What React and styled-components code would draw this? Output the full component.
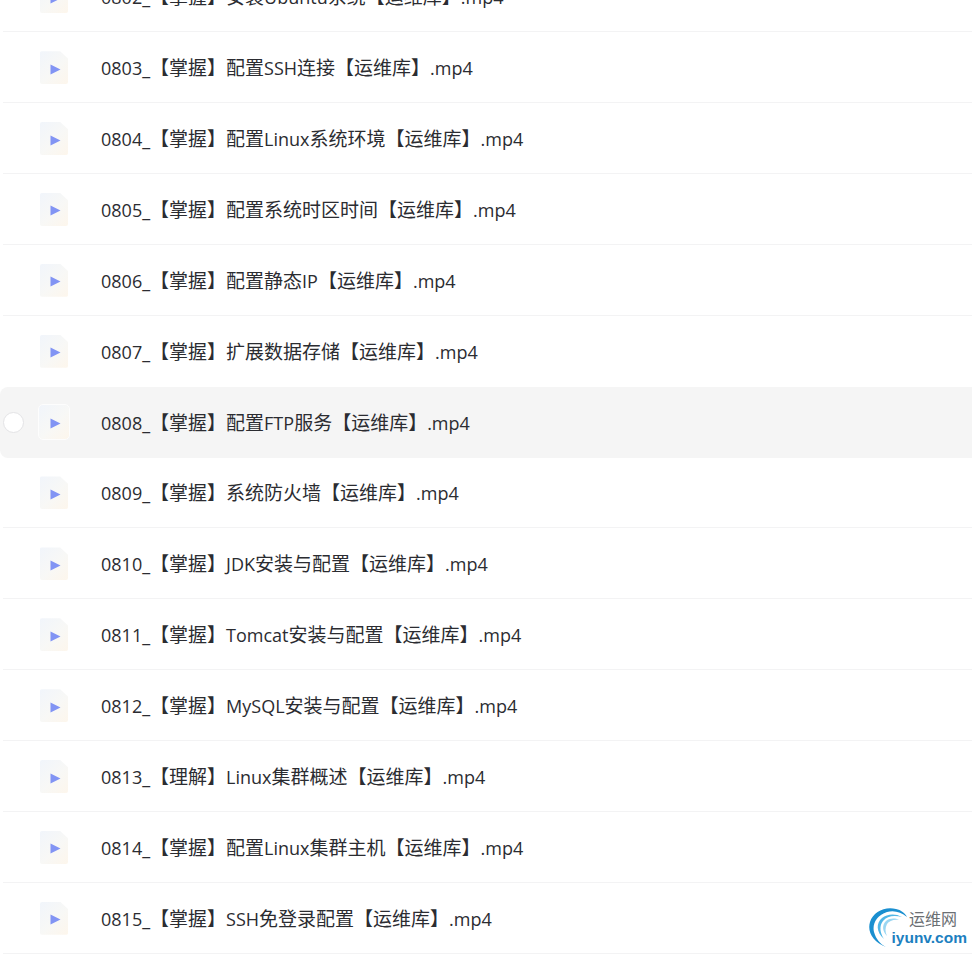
import React from "react";
import styled, { createGlobalStyle } from "styled-components";

const Global = createGlobalStyle`
  html, body { margin: 0; padding: 0; background: #fff; height: 954px; overflow: hidden; }
  #root { height: 954px; overflow: hidden; }
`;

const List = styled.ul`
  list-style: none;
  margin: -38.7px 0 0;
  padding: 0;
  font-family: "Noto Sans CJK SC", sans-serif;
`;

const Row = styled.li`
  position: relative;
  display: flex;
  align-items: center;
  height: 70.9px;
  box-sizing: border-box;
  padding-left: ${(p) => (p.$active ? "38px" : "40px")};
  background: ${(p) => (p.$active ? "#f5f5f5" : "#fff")};
  border-radius: ${(p) => (p.$active ? "8px 0 0 8px" : "0")};
  &::after {
    content: "";
    position: absolute;
    left: 3px;
    right: 0;
    bottom: 0;
    height: 1px;
    background: ${(p) => (p.$active || p.$beforeActive ? "transparent" : "#f3f3f4")};
  }
`;

const Radio = styled.span`
  position: absolute;
  left: 3px;
  top: 50%;
  width: 21px;
  height: 21px;
  margin-top: -10.5px;
  box-sizing: border-box;
  border-radius: 50%;
  background: #fff;
  border: 1px solid #e4e4e6;
`;

const Thumb = styled.span`
  flex: none;
  width: ${(p) => (p.$active ? "32px" : "28px")};
  height: ${(p) => (p.$active ? "36px" : "33px")};
  padding: 3px 0 0 2px;
  display: flex;
  align-items: center;
  justify-content: center;
  border-radius: ${(p) => (p.$active ? "5px" : "2px")};
  box-sizing: border-box;
  border: ${(p) => (p.$active ? "1.5px solid #fdfdfd" : "none")};
  background: linear-gradient(135deg, #f1f5fb 0%, #f8f8f6 55%, #fdf6ec 100%);
  clip-path: ${(p) => (p.$active ? "none" : "polygon(0 0, 72% 0, 100% 22%, 100% 100%, 0 100%)")};
`;

const Title = styled.span`
  margin-left: ${(p) => (p.$active ? "31px" : "33px")};
  font-size: 19px;
  line-height: 26px;
  color: #2b2c31;
  white-space: nowrap;
`;

const Latin = styled.span`
  font-family: "Open Sans", sans-serif;
  font-size: 18px;
`;

const Logo = styled.div`
  position: absolute;
  right: 0;
  bottom: 4px;
  width: 104px;
  height: 44px;
  display: flex;
  flex-direction: column;
  align-items: flex-end;
`;

const LogoArc = styled.svg`
  position: absolute;
  left: 0;
  top: 0;
`;

const LogoCn = styled.span`
  font: 16px/18px "Noto Sans CJK SC", sans-serif;
  color: #6b6f73;
  margin: 3px 15px 0 0;
`;

const LogoEn = styled.span`
  font: bold 15.5px/17px "Liberation Sans", sans-serif;
  color: #1c7fc0;
  margin: 2px 5px 0 0;
`;

const PlayIcon = () => (
  <svg width="11" height="11" viewBox="0 0 11 11">
    <path d="M0.5 0.5 L10.5 5.5 L0.5 10.5 Z" fill="#8294f4" />
  </svg>
);

const titles = [
  "0802_【掌握】安装Ubuntu系统【运维库】.mp4",
  "0803_【掌握】配置SSH连接【运维库】.mp4",
  "0804_【掌握】配置Linux系统环境【运维库】.mp4",
  "0805_【掌握】配置系统时区时间【运维库】.mp4",
  "0806_【掌握】配置静态IP【运维库】.mp4",
  "0807_【掌握】扩展数据存储【运维库】.mp4",
  "0808_【掌握】配置FTP服务【运维库】.mp4",
  "0809_【掌握】系统防火墙【运维库】.mp4",
  "0810_【掌握】JDK安装与配置【运维库】.mp4",
  "0811_【掌握】Tomcat安装与配置【运维库】.mp4",
  "0812_【掌握】MySQL安装与配置【运维库】.mp4",
  "0813_【理解】Linux集群概述【运维库】.mp4",
  "0814_【掌握】配置Linux集群主机【运维库】.mp4",
  "0815_【掌握】SSH免登录配置【运维库】.mp4",
];

const runs = (t) =>
  t.split(/([\x00-\x7f]+)/).filter(Boolean).map((s, i) =>
    /^[\x00-\x7f]/.test(s) ? <Latin key={i}>{s}</Latin> : <React.Fragment key={i}>{s}</React.Fragment>
  );

export default function App() {
  return (
    <>
      <Global />
      <List>
        {titles.map((t, i) => (
          <Row key={t} $active={i === 6} $beforeActive={i === 5}>
            {i === 6 && <Radio />}
            <Thumb $active={i === 6}>
              <PlayIcon />
            </Thumb>
            <Title $active={i === 6}>{runs(t)}</Title>
          </Row>
        ))}
      </List>
      <Logo>
        <LogoArc width="44" height="44" viewBox="0 0 44 44">
          <path d="M18 41 C5 36 -1 26 2 16 C5 6 17 0 28 3 C33 4 37 7 39 11 C33 6 26 4 19 6 C9 9 4 18 6 26 C8 33 12 38 18 41 Z" fill="#1a8fd0" />
          <path d="M16 33 C8 26 8 17 14 12 C19 8 27 7 34 11 C26 9 19 10 15 15 C11 20 12 27 16 33 Z" fill="#4fb6e6" />
          <path d="M19 30 C14 25 14 19 18 15 C22 12 27 12 31 14 C26 13 21 15 19 18 C17 22 17 26 19 30 Z" fill="#9ad6f2" />
        </LogoArc>
        <LogoCn>运维网</LogoCn>
        <LogoEn>iyunv.com</LogoEn>
      </Logo>
    </>
  );
}
